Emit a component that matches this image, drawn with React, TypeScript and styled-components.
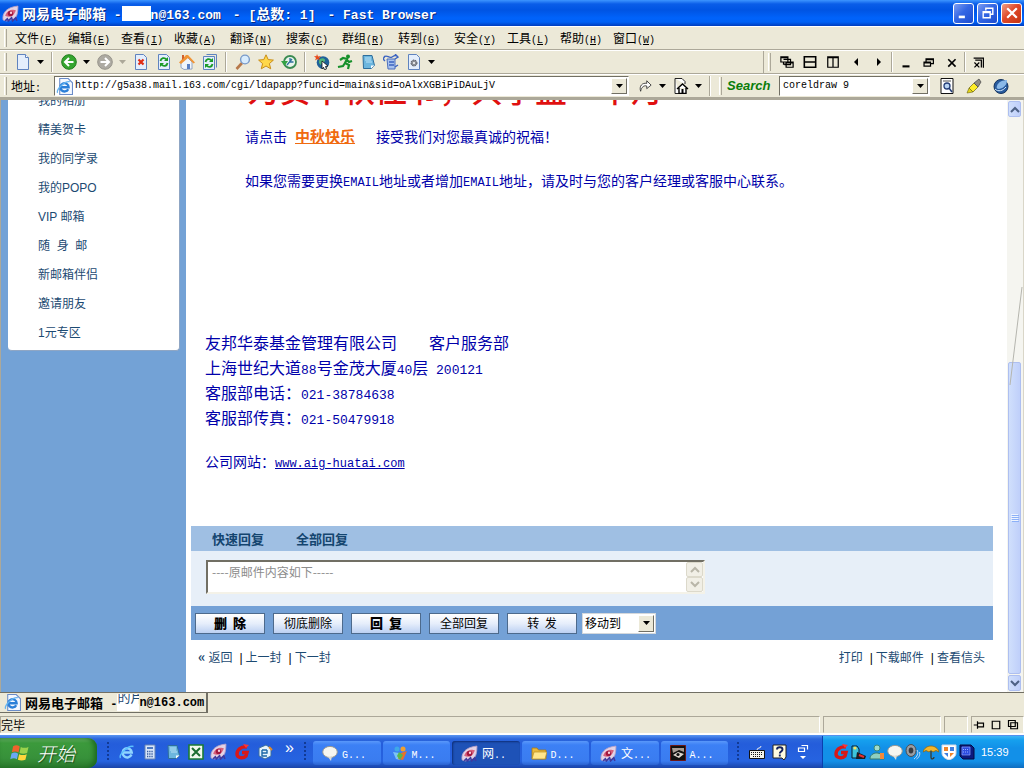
import React from 'react';
import styled, { createGlobalStyle, css } from 'styled-components';

const cjk = '"Noto Sans CJK SC", sans-serif';
const mono = '"Liberation Mono", "Noto Sans CJK SC", monospace';

const Global = createGlobalStyle`
  *, *::before, *::after { box-sizing: border-box; }
  body { margin: 0; background: #ece9d8; }
  button, input, select, textarea { font: inherit; color: inherit; margin: 0; padding: 0; border: 0; border-radius: 0; outline: none; }
  button { background: none; cursor: pointer; }
  a { color: inherit; text-decoration: none; }
`;

/* ---------- shell ---------- */
const Screen = styled.div`
  display: flex;
  flex-direction: column;
  height: 100vh;
  overflow: hidden;
  font-family: ${cjk};
  font-size: 12px;
  line-height: 16px;
  color: #000;
  white-space: pre;
`;
const Latin = styled.span<{ $size?: number }>`
  font-family: ${mono};
  font-size: ${(p) => p.$size ?? 10}px;
  line-height: 0;
`;

/* ---------- title bar ---------- */
const TitleBar = styled.header`
  display: flex;
  flex: none;
  align-items: center;
  height: 26px;
  padding: 0 2px;
  background: linear-gradient(#3d95ff 0, #0a5de8 4px, #0054e3 10px, #0063fb 18px, #0061f5 22px, #003dbe 26px);
  color: #fff;
  font-size: 14px;
  font-weight: bold;
  text-shadow: 1px 1px 0 #0a2a80;
`;
const TitleText = styled.h1`
  display: flex;
  flex: 1;
  align-items: center;
  margin: 0;
  padding-left: 3px;
  font-size: 14px;
  line-height: 20px;
`;
const TitlePart = styled.span`
  padding-right: 12px;
`;
const Mask = styled.span<{ $w: number; $h: number }>`
  flex: none;
  width: ${(p) => p.$w}px;
  height: ${(p) => p.$h}px;
  background: #fff;
  overflow: hidden;
`;
const WindowButtons = styled.div`
  display: flex;
  gap: 3px;
`;
const WindowButton = styled.button<{ $close?: boolean }>`
  display: grid;
  place-items: center;
  width: 21px;
  height: 21px;
  border: 1px solid #fff;
  border-radius: 3px;
  background: ${(p) => (p.$close ? 'linear-gradient(135deg, #f0a088, #e0492a 45%, #c43410)' : 'linear-gradient(135deg, #7d9df2, #3467e4 45%, #1c4cd0)')};
`;

/* ---------- menus and toolbars ---------- */
const Bar = styled.div`
  display: flex;
  flex: none;
  align-items: center;
  height: 24px;
  background: #ece9d8;
  border-top: 1px solid #fff;
  border-bottom: 1px solid #aca899;
`;
const Grip = styled.span`
  flex: none;
  width: 3px;
  height: 18px;
  margin: 0 4px;
  border-right: 1px solid #aca899;
  border-left: 1px solid #fff;
`;
const MenuButton = styled.button<{ $wide?: boolean }>`
  width: ${(p) => (p.$wide ? 56 : 53)}px;
  text-align: left;
  line-height: 20px;
`;
const MenuList = styled.nav`
  display: flex;
  padding-left: 4px;
`;
const Tool = styled.button`
  display: grid;
  flex: none;
  place-items: center;
  width: 23px;
  height: 22px;
`;
const Drop = styled.button<{ $muted?: boolean }>`
  display: grid;
  flex: none;
  place-items: center;
  width: 13px;
  height: 22px;
  color: ${(p) => (p.$muted ? '#aca899' : '#000')};
`;
const Divider = styled.span<{ $narrow?: boolean }>`
  flex: none;
  width: 2px;
  height: 20px;
  margin: 0 ${(p) => (p.$narrow ? 1 : 4)}px;
  border-left: 1px solid #aca899;
  border-right: 1px solid #fff;
`;
const Spacer = styled.span`
  flex: 1;
`;
const WindowTools = styled.div`
  display: flex;
  align-items: center;
  padding-right: 34px;
  border-left: 1px solid #aca899;
`;
const AddressLabel = styled.label`
  width: 43px;
  line-height: 20px;
`;
const Combo = styled.div<{ $w?: number }>`
  display: flex;
  align-items: center;
  ${(p) => (p.$w ? css`flex: none; width: ${p.$w}px;` : css`flex: 1;`)}
  height: 20px;
  padding: 1px;
  background: #fff;
  border: 1px solid;
  border-color: #716f64 #fff #fff #716f64;
  font: 10px/16px ${mono};
`;
const ComboInput = styled.input`
  flex: 1;
  min-width: 0;
  padding-left: 2px;
  background: transparent;
`;
const arrowFace = css`
  display: grid;
  place-items: center;
  width: 16px;
  height: 16px;
  background: #ece9d8;
  border: 1px solid;
  border-color: #fff #716f64 #716f64 #fff;
`;
const ComboArrow = styled.button`
  ${arrowFace}
  flex: none;
`;
const SearchWord = styled.span`
  width: 53px;
  padding-left: 1px;
  color: #0a7d0a;
  font: italic bold 13px/20px "Liberation Sans", sans-serif;
`;
const AddressTail = styled.div`
  display: flex;
  align-items: center;
  padding: 0 12px 0 4px;
`;
const SearchIcons = styled.div`
  display: flex;
  gap: 4px;
  padding-left: 5px;
`;

/* ---------- page ---------- */
const Viewport = styled.div`
  display: flex;
  flex: 1;
  min-height: 0;
  background: #fff;
  border-top: 2px solid #aca899;
  border-bottom: 1px solid #716f64;
  overflow: hidden;
`;
const Sidebar = styled.aside`
  flex: none;
  width: 186px;
  padding-left: 7px;
  background: #73a2d6;
  border-left: 1px solid #aca899;
`;
const SideCard = styled.nav`
  width: 172px;
  height: 251px;
  overflow: hidden;
  background: #fff;
  border-right: 1px solid #8fa6c4;
  border-bottom: 1px solid #8fa6c4;
  border-radius: 0 0 4px 4px;
`;
const SideList = styled.ul`
  margin: -13px 0 0;
  padding: 0 0 0 30px;
  list-style: none;
`;
const SideItem = styled.li`
  height: 29px;
  color: #1c4a72;
  font: 12px/29px "Liberation Sans", ${cjk};
`;
const Mail = styled.main`
  flex: 1;
  min-width: 0;
  padding: 0 14px 0 5px;
  overflow: hidden;
`;
const Letter = styled.article`
  height: 426px;
  overflow: hidden;
  padding-left: 14px;
  color: #00a;
  font-size: 14px;
  line-height: 20px;
`;
const Greeting = styled.h2`
  height: 27px;
  margin: -25px 0 24px 42px;
  color: #e01010;
  font-size: 32px;
  font-weight: 500;
  line-height: 27px;
`;
const Line = styled.p`
  margin: 0 0 24px 40px;
`;
const FestivalLink = styled.a`
  margin: 0 21px 0 8px;
  color: #f06a10;
  font-size: 15px;
  font-weight: bold;
  line-height: 0;
  text-decoration: underline;
`;
const Contact = styled.address`
  margin-top: 140px;
  color: #00a;
  font-size: 16px;
  font-style: normal;
  line-height: 25px;
`;
const Site = styled.p`
  margin: 21px 0 0;
`;
const SiteLink = styled.a`
  font: 12px/1px ${mono};
  text-decoration: underline;
`;
const ReplyTabs = styled.div`
  display: flex;
  gap: 32px;
  height: 25px;
  padding-left: 21px;
  background: #9fbfe3;
  color: #14456f;
  font-size: 13px;
  font-weight: bold;
`;
const ReplyTab = styled.button`
  line-height: 25px;
`;
const ReplyBody = styled.div`
  height: 55px;
  padding: 9px 15px;
  background: #e7eff8;
`;
const ReplyBox = styled.div`
  display: flex;
  width: 499px;
  max-width: 100%;
  height: 34px;
  background: #fff;
  border: 2px solid;
  border-color: #716f64 #f4f2e8 #f4f2e8 #716f64;
`;
const ReplyText = styled.textarea`
  flex: 1;
  min-width: 0;
  padding: 2px 4px;
  resize: none;
  overflow: hidden;
  background: transparent;
  color: #8c8c8c;
  font: 12px/16px ${cjk};
`;
const ReplyScroll = styled.div`
  display: flex;
  flex-direction: column;
  width: 17px;
`;
const ReplyArrow = styled.button`
  display: grid;
  flex: 1;
  place-items: center;
  background: #f1efe6;
  border: 1px solid #dcd9cb;
  border-radius: 2px;
  color: #b9b6a8;
`;
const Actions = styled.div`
  display: flex;
  align-items: center;
  gap: 8px;
  height: 34px;
  padding: 0 4px;
  background: #74a1d6;
`;
const Action = styled.button<{ $strong?: boolean }>`
  width: 70px;
  height: 21px;
  border: 1px solid #4d6a8c;
  background: linear-gradient(#fff, #e6eefb 50%, #bcd0f2);
  font-size: ${(p) => (p.$strong ? 13 : 12)}px;
  font-weight: ${(p) => (p.$strong ? 900 : 400)};
  line-height: 18px;
`;
const MoveBox = styled.label`
  position: relative;
  display: flex;
  margin-left: -3px;
`;
const MoveSelect = styled.select`
  width: 74px;
  height: 21px;
  padding-left: 2px;
  appearance: none;
  background: #fff;
  border: 1px solid #d4d8dc;
  line-height: 18px;
`;
const MoveArrow = styled.span`
  ${arrowFace}
  position: absolute;
  top: 2px;
  right: 2px;
  height: 17px;
  pointer-events: none;
`;
const MailNav = styled.footer`
  display: flex;
  justify-content: space-between;
  padding: 9px 8px 0 7px;
  color: #1c4a72;
`;
const NavLinks = styled.div`
  display: flex;
`;
const NavLink = styled.a`
  & + & {
    padding-left: 7px;
  }
  & + &::before {
    content: '|';
    padding-right: 3px;
    color: #000;
    font-family: "Liberation Sans", sans-serif;
  }
`;
const BackMark = styled.b`
  padding-right: 3px;
  font-size: 14px;
  line-height: 0;
`;
const Scrollbar = styled.div`
  position: relative;
  display: flex;
  flex: none;
  flex-direction: column;
  width: 17px;
  padding: 1px 2px 1px 1px;
  background: #f5f5f0;
  border-right: 1px solid #d9d6c8;
`;
const scrollFace = css`
  background: linear-gradient(90deg, #d0dffc, #bfcffa);
  border: 1px solid #aebff0;
  border-radius: 2px;
`;
const ScrollArrow = styled.button`
  ${scrollFace}
  display: grid;
  flex: none;
  place-items: center;
  height: 16px;
  color: #4d6185;
`;
const ScrollGap = styled.div`
  flex: 246;
`;
const ScrollThumb = styled.div`
  ${scrollFace}
  display: grid;
  flex: 311;
  place-items: center;
  margin-bottom: 1px;
`;
const Hair = styled.svg`
  position: absolute;
  top: 187px;
  right: 0;
  pointer-events: none;
`;

/* ---------- page tabs and status ---------- */
const PageTabs = styled.div`
  display: flex;
  flex: none;
  height: 23px;
  background: #ece9d8;
`;
const PageTab = styled.button`
  display: flex;
  align-items: center;
  width: 208px;
  height: 20px;
  padding-left: 4px;
  overflow: hidden;
  border: 1px solid;
  border-width: 0 2px 1px 0;
  border-color: #716f64;
  font-size: 13px;
  font-weight: bold;
  text-align: left;
`;
const TabTitle = styled.span`
  padding-left: 4px;
`;
const TabMask = styled(Mask)`
  color: #1c4a72;
  font-weight: 400;
  line-height: 6px;
`;
const StatusBar = styled.div`
  display: flex;
  flex: none;
  gap: 3px;
  height: 19px;
  background: #ece9d8;
  border-bottom: 2px solid #fff;
`;
const Pane = styled.div<{ $w?: number }>`
  display: flex;
  align-items: center;
  ${(p) => (p.$w ? css`flex: none; width: ${p.$w}px;` : css`flex: 1;`)}
  gap: 3px;
  border: 1px solid;
  border-color: #aca899 #fff #ece9d8 #aca899;
`;
const StatusTool = styled.button`
  display: grid;
  place-items: center;
  width: 14px;
  height: 15px;
`;

/* ---------- taskbar ---------- */
const Taskbar = styled.footer`
  display: flex;
  flex: none;
  align-items: center;
  height: 33px;
  background: linear-gradient(#5a96f2 0, #2b66dc 4px, #245ddb 9px, #2663e0 26px, #1a44a8 33px);
  color: #fff;
`;
const StartButton = styled.button`
  display: flex;
  flex: none;
  align-items: center;
  gap: 7px;
  align-self: stretch;
  width: 97px;
  margin-top: 3px;
  padding-left: 10px;
  border-radius: 0 9px 9px 0;
  background: linear-gradient(#6cb56a 0, #3c9a3c 5px, #37913a 20px, #2b7a2c 30px);
  box-shadow: inset -3px 0 5px #1d6a20;
  font-size: 19px;
  font-style: italic;
  font-weight: 300;
  line-height: 26px;
  text-shadow: 1px 1px 1px #1a4a1a;
`;
const DotGrip = styled.span`
  flex: none;
  width: 6px;
  height: 20px;
  background: conic-gradient(#123a94 25%, transparent 0) 0 0 / 4px 4px;
`;
const QuickLaunch = styled.div`
  display: flex;
  align-items: center;
  padding-right: 2px;
  margin-left: 8px;
`;
const QuickRow = styled.div`
  display: flex;
  align-items: center;
  margin-left: 4px;
`;
const Chevron = styled.button`
  align-self: flex-start;
  width: 24px;
  padding: 0 0 8px 3px;
  font: 16px/14px "Liberation Sans", sans-serif;
`;
const Tasks = styled.div`
  display: flex;
  flex: 1;
  gap: 2px;
  min-width: 0;
  padding: 3px 7px 0 5px;
`;
const Task = styled.button<{ $active?: boolean }>`
  display: flex;
  flex: 1;
  align-items: center;
  gap: 4px;
  height: 24px;
  min-width: 0;
  padding-left: 9px;
  border-radius: 3px;
  background: ${(p) => (p.$active ? '#1e52b7' : 'linear-gradient(#5a98fa, #3c80f5 4px, #3a7cf0 20px, #2b62cf)')};
  box-shadow: ${(p) => (p.$active ? 'inset 1px 1px 2px #0f2f78' : 'none')};
  overflow: hidden;
`;
const InputTools = styled.div`
  display: flex;
  align-items: center;
  flex: none;
  padding: 0 8px 0 4px;
`;
const Tray = styled.div`
  display: flex;
  flex: none;
  align-items: center;
  align-self: stretch;
  width: 202px;
  margin-top: 1px;
  padding-left: 9px;
  border-left: 1px solid #0a3fae;
  background: linear-gradient(#3fb5f5 0, #16a0ee 4px, #1290e8 12px, #1290e8 25px, #0f6dc0 32px);
`;
const TrayIcon = styled.span`
  display: grid;
  place-items: center;
  width: 18px;
`;
const Clock = styled.time`
  padding-left: 5px;
  font: 11px/16px "Liberation Sans", sans-serif;
`;

/* ---------- icons ---------- */
const Ico = ({ children, s = 16 }: { children: React.ReactNode; s?: number }) => (
  <svg width={s} height={s} viewBox="0 0 16 16" aria-hidden="true">{children}</svg>
);
const Tri = () => (
  <svg width="7" height="4" viewBox="0 0 7 4" aria-hidden="true"><path d="M0 0h7L3.500 4z" fill="currentColor" /></svg>
);
const Up = ({ flip }: { flip?: boolean }) => (
  <svg width="10" height="7" viewBox="0 0 10 7" aria-hidden="true">
    <path d={flip ? 'M1 1l4 4 4-4' : 'M1 6l4-4 4 4'} fill="none" stroke="currentColor" strokeWidth="2" />
  </svg>
);
const pageShape = (
  <path d="M2.500 .5h8l3 3v12h-11z" fill="#e4eefc" stroke="#5f83bf" />
);
const BrowserIcon = () => (
  <Ico s={17}>
    <path d="M1 14C0 8 4 2 15 1c0 6-1 10-3 12l-4 1-4 1z" fill="#e3d3e6" stroke="#b9a3c8" strokeWidth=".8" />
    <path d="M3 10c2-6 8-6 10-5-1 4-5 8-10 5z" fill="#d8607c" />
    <circle cx="8" cy="8" r="2.600" fill="#a01840" /><circle cx="8.500" cy="7.300" r="1.100" fill="#f9d0dc" />
    <path d="M3 15l2-2 1 2 3-3 1 3 3-3 1 3" fill="none" stroke="#3d3aa0" strokeWidth="1.500" />
  </Ico>
);
const IeMark = () => (
  <>
    <path d="M11.500 10.500A3.900 3.900 0 1 1 11.900 8.700H5" fill="none" stroke="#2a7fd8" strokeWidth="2.200" />
    <path d="M1.500 14C0 11 8 2.500 13 3.500" fill="none" stroke="#64b4f0" strokeWidth="1.200" />
  </>
);
const IePage = () => (<Ico s={17}><path d="M3.500 .5h8l4 4v11h-12z" fill="#f4f8ff" stroke="#6a8cc8" /><IeMark /></Ico>);
const IeIcon = () => (<Ico><path d="M12.500 10.500A4.600 4.600 0 1 1 12.800 8.500H4.500" fill="none" stroke="#8fd4ff" strokeWidth="2.400" /><path d="M1.500 14C-.5 11 9 1 14.500 2.500" fill="none" stroke="#5ac0ff" strokeWidth="1.400" /></Ico>);
const NewPage = () => (<Ico><path d="M2.500 .5h8l3 3v12h-11z" fill="#e4eefc" stroke="#5f83bf" /><path d="M10.500 .5v3h3" fill="#fff" stroke="#5f83bf" /></Ico>);
const RoundArrow = ({ back }: { back?: boolean }) => (
  <Ico>
    <circle cx="8" cy="8" r="7.300" fill={back ? '#35a52f' : '#adaaa2'} stroke={back ? '#1f7d1c' : '#97948b'} />
    <path d={back ? 'M12.500 8H4.500M8 4L4 8l4 4' : 'M3.500 8h8M8 4l4 4-4 4'} fill="none" stroke="#fff" strokeWidth="2" />
  </Ico>
);
const StopIcon = () => (<Ico>{pageShape}<path d="M5.500 5.500l5 5M10.500 5.500l-5 5" stroke="#e02c14" strokeWidth="2.200" /></Ico>);
const greenTurn = (
  <><path d="M4.500 7c.5-3 4-4 6-1.500M11.500 9c-.5 3-4 4-6 1.500" fill="none" stroke="#1a9a26" strokeWidth="1.800" /><path d="M12 3v4H8zM4 13V9h4z" fill="#1a9a26" /></>
);
const Refresh = () => (<Ico>{pageShape}{greenTurn}</Ico>);
const RefreshAll = () => (<Ico><path d="M4.500 .5h10v13" fill="none" stroke="#5f83bf" /><path d="M1.500 2.500h11v13h-11z" fill="#e4eefc" stroke="#5f83bf" /><g transform="translate(-1 1)">{greenTurn}</g></Ico>);
const HomeIcon = () => (
  <Ico><path d="M2 8l6-5 5 5v7l-8 .5-3-2z" fill="#f1f5fb" stroke="#7c93bd" strokeWidth=".8" /><path d="M0 8.500L7 1l2 0 7 7.500-1.500 1L9 4 2 10z" fill="#f09436" /><path d="M8 10h3v5H8z" fill="#5a7fc4" /><path d="M3 1h2v3L3 6z" fill="#d0602c" /></Ico>
);
const Magnifier = () => (<Ico><path d="M7 9l-5.500 6" stroke="#b7784a" strokeWidth="2.600" /><circle cx="10" cy="5.500" r="4.400" fill="#d8ecfd" stroke="#7799c8" strokeWidth="1.400" /></Ico>);
const Star = () => (<Ico><path d="M8 .8l2.200 4.800 5.200.5-4 3.500 1.300 5.200L8 12l-4.700 2.800 1.300-5.200-4-3.500 5.200-.5z" fill="#ffd84a" stroke="#c98d17" /></Ico>);
const HistoryIcon = () => (<Ico><circle cx="9" cy="8" r="6" fill="#e9f5ec" stroke="#3b8b52" strokeWidth="1.800" /><path d="M9 4v4h3.500M6 11l5-6" fill="none" stroke="#2e6f9c" strokeWidth="1.300" /><path d="M0 7h7l-3.500 5z" fill="#34a244" /></Ico>);
const GlobeIcon = () => (<Ico><circle cx="9" cy="8.500" r="6.300" fill="#1f6098" /><path d="M6 5c3-2 6 0 5 2s-4 1-4 4c-2-1-3-4-1-6z" fill="#4fb47c" /><path d="M8 7l6 5-2.500.5 1 2.500-2 .8-1-2.600L8 15z" fill="#fff" stroke="#111" strokeWidth=".8" /><path d="M3 0l1 2.500L7 2 5 4l1 2.500L3.500 5 1 6.500 2 4 0 2l2.300.3z" fill="#e84b1c" /></Ico>);
const Runner = () => (<Ico><circle cx="11" cy="2.500" r="2" fill="#16902a" /><path d="M3 6l3-2 4 1-2 4 4 2-1 4M8 9l-2 3-5 1M10 6l2 2 3-1" fill="none" stroke="#16902a" strokeWidth="2.200" /></Ico>);
const NoteIcon = () => (<Ico><path d="M3 1.500h9l2.500 10-3 3H3.500z" fill="#6cb6de" stroke="#2e6e9c" /><path d="M5 4h6M5 6h6M6 8h6" stroke="#b8e0f5" /><path d="M11 14.500v-3h3.500z" fill="#fff" /></Ico>);
const SyncIcon = () => (<Ico><path d="M4 5h8v10H5z" fill="#a8c2ee" stroke="#4c6fbd" /><path d="M1 3c3-3 5 2 8 0s4-2 6 0M12 0l3 3-3 2M2 7L0 5l2-3M6 8h5M6 11h5M12 13l3-2" fill="none" stroke="#3b63c0" strokeWidth="1.400" /></Ico>);
const GearPage = () => (<Ico>{pageShape}<circle cx="8" cy="9" r="3" fill="#8b8e96" stroke="#50545e" strokeDasharray="1.500 1" /><circle cx="8" cy="9" r="1" fill="#fff" /></Ico>);
const Outline = ({ d, w = 1.4, s = 14 }: { d: string; w?: number; s?: number }) => (
  <Ico s={s}><path d={d} fill="none" stroke="#000" strokeWidth={w} /></Ico>
);
const Wedge = ({ left }: { left?: boolean }) => (<Ico><path d={left ? 'M10 4v8L6 8z' : 'M6 4v8l4-4z'} /></Ico>);
const GoIcon = () => (<Ico s={14}><path d="M3 14C1 8 5 4 10 5V2l5 5-5 4V8C7 7 4 9 3 14z" fill="#fff" stroke="#333" /></Ico>);
const HomePage = () => (<Ico><path d="M2 .5h7l3 3V6M2 .5v15h4" fill="#fff" stroke="#222" /><path d="M4 11l5.500-5 5.500 5M6 10v5.500h7V10" fill="#fff" stroke="#000" strokeWidth="1.400" /><path d="M8.500 11h2v4h-2z" /></Ico>);
const SearchPage = () => (<Ico><path d="M2 .5h12v15H2z" fill="#fff" stroke="#111" /><path d="M4 3h8" stroke="#555" /><circle cx="8" cy="8" r="3" fill="#b9d5f5" stroke="#243e78" strokeWidth="1.300" /><path d="M10 10l3 4" stroke="#243e78" strokeWidth="1.600" /></Ico>);
const Marker = () => (<Ico><path d="M1 15l2-5 4 4z" fill="#e5d618" stroke="#6b6410" strokeWidth=".6" /><path d="M3 10l5-5 4 4-5 5z" fill="#ffee28" stroke="#6b6410" strokeWidth=".7" /><path d="M8 5l5-4 2 3-3 5z" fill="#8f8c84" stroke="#444" strokeWidth=".7" /></Ico>);
const BlueGlobe = () => (<Ico><circle cx="8" cy="8.500" r="7" fill="#285b9e" stroke="#16345e" /><path d="M4 8c1-4 6-6 10-6 0 5-3 8-8 9-2 0-3-1-2-3z" fill="#8ab9e8" /><path d="M2 11c3 3 8 2 11-2" stroke="#d6ecff" fill="none" /></Ico>);
const Flag = () => (
  <Ico s={20}><path d="M2.500 2.500c2-1 3.700-.8 5.300.2L6.800 7.500C5 6.500 3.400 6.500 1.500 7.300z" fill="#f0622c" /><path d="M8.600 3.200c2 .9 4 .9 6.200 0l-1.100 4.700c-2 .8-4 .8-6.100 0z" fill="#9ad24c" /><path d="M1.200 8.300c2-.9 3.700-.8 5.300.2l-1 4.500c-1.600-1-3.300-1-5.300 0z" fill="#6aa8f4" /><path d="M7.300 8.900c2 .9 4 .9 6.100 0l-1.100 4.500c-2 .8-4 .8-6 0z" fill="#ffd63c" /></Ico>
);
const Calculator = () => (<Ico><path d="M3 1h10v14H3z" fill="#d8e6fa" stroke="#6783b3" /><path d="M5 3h6v2H5z" fill="#4c79c2" /><path d="M5 7.500h6M5 10h6M5 12.500h6" stroke="#35599b" strokeWidth="1.300" strokeDasharray="1.300 .9" /></Ico>);
const ExcelIcon = () => (<Ico><path d="M1 1h14v14H1z" fill="#f0f8ee" stroke="#1b7a35" strokeWidth="1.600" /><path d="M4 4l8 8M12 4l-8 8" stroke="#1b6d30" strokeWidth="2" /></Ico>);
const RedG = () => (<Ico><path d="M13 3C7 2 3 6 3 10c0 4 6 5 9 2l1-3.500H8" fill="none" stroke="#d81818" strokeWidth="3.400" /><path d="M9 0l6 1-3 3z" fill="#f33" /></Ico>);
const CubeIcon = () => (<Ico><path d="M2 4l7-3 5 3v8l-6 3-6-3z" fill="#e4f3fc" stroke="#3a6d9e" /><path d="M5 6h5M5 6v6h5M10 6v3H5" stroke="#1c68a8" strokeWidth="1.400" fill="none" /><path d="M12 3l3 3" stroke="#e08a2a" strokeWidth="2" /></Ico>);
const Bubble = () => (<Ico><ellipse cx="8" cy="7" rx="7.300" ry="5.600" fill="#f6f6f0" stroke="#9a9a94" /><path d="M6 12l3 4 1-5z" fill="#deded6" /></Ico>);
const Buddies = () => (<Ico><circle cx="5" cy="4" r="2.500" fill="#3fa8e8" /><circle cx="11" cy="4" r="2.500" fill="#f0a030" /><path d="M1 7l6 1 1 7-4-1z" fill="#7cc4f4" /><path d="M15 6l-6 2-3 6 5 1z" fill="#e8702c" /><path d="M7 7l4 3-3 5-3-4z" fill="#58b84c" /></Ico>);
const Folder = () => (<Ico><path d="M1 3h5l1.500 2H15v9H1z" fill="#e8b83c" stroke="#a67a18" strokeWidth=".8" /><path d="M3 7h13l-2 7H1z" fill="#ffe68c" stroke="#b88c22" strokeWidth=".7" /></Ico>);
const EyePic = () => (<Ico><path d="M.5.5h15v15H.5z" fill="#111" stroke="#6a1616" /><path d="M2 3h12v4L9 5 3 8z" fill="#a89c94" /><path d="M3 10l5-3 6 2-5 4z" fill="#ddd5cd" /><circle cx="8" cy="9.500" r="1.600" fill="#111" /></Ico>);
const Keyboard = () => (<Ico><path d="M8 6c0-3 4-1 4-4" fill="none" stroke="#eee" /><path d="M.5 6.500h15v8H.5z" fill="#f4f2e8" stroke="#111" /><path d="M2 8.500h12M2 10.500h12M4 12.500h8" stroke="#111" strokeDasharray="1 1" /></Ico>);
const HelpIcon = () => (<Ico><path d="M1 1h13v12l-2 3-2-2H1z" fill="#fffce0" stroke="#222" /><path d="M5 5.500c0-3 5.500-3 5.500 0 0 2-2.700 2-2.700 4M7.800 10.500v2" fill="none" stroke="#13205c" strokeWidth="1.900" /></Ico>);
const RestoreIcon = () => (<Ico><path d="M6.500 1.500h6v4M3.500 4h6v3.500h-6z" fill="none" stroke="#fff" strokeWidth="1.200" /><path d="M5 12h6l-3 3z" fill="#fff" /></Ico>);
const Duo = () => (<Ico><path d="M1 2h5l2 3v9H1z" fill="#3cc4dc" stroke="#0a1c30" /><path d="M6 8l9 4-1 3H5z" fill="#1c1c22" /><path d="M8 11l5 2" stroke="#e83030" strokeWidth="2" /><circle cx="4" cy="4" r="1.600" fill="#f8e060" /></Ico>);
const Person = () => (<Ico><circle cx="8" cy="4" r="3" fill="#a2dccb" stroke="#3d8878" /><path d="M1 15c0-8 13-8 14 0z" fill="#8fd0bf" stroke="#36786c" /><path d="M11 9h4v6h-4z" fill="#f08a3c" /></Ico>);
const Speaker = () => (<Ico><ellipse cx="6" cy="6.500" rx="5" ry="6" fill="#9a9ea4" stroke="#4a4d52" /><ellipse cx="6" cy="6.500" rx="2.300" ry="3" fill="#383a40" /><path d="M12 6c2 3 0 7-3 9M14.500 8c1 3-1 6-3 7" fill="none" stroke="#c4dcf8" /></Ico>);
const Umbrella = () => (<Ico><path d="M0 8C2 0 14 0 16 8l-3-1.500L10 8 8 6.500 6 8 3 6.500z" fill="#f4b62a" stroke="#8e6410" strokeWidth=".8" /><path d="M8 7v6c0 3 3 2 3 0" fill="none" stroke="#3a3a30" strokeWidth="1.300" /></Ico>);
const Shield = () => (<Ico><path d="M1 1h14v8c0 4-4 6-7 7-3-1-7-3-7-7z" fill="#fff" stroke="#d4d8e4" /><path d="M3 3h4v4H3zM9 9h4l-4 4z" fill="#f0852a" /><path d="M9 3h4v4H9zM3 9h4v4z" fill="#3f7fe0" /></Ico>);
const Monitor = () => (<Ico><path d="M1 1h11l3 3v11H4l-3-3z" fill="#0c1a80" stroke="#050a40" /><path d="M3 3h8v8H3z" fill="#2c4ce0" stroke="#8ca4ff" strokeWidth=".7" /><path d="M4 5.500h6M4 8h6" stroke="#9ab0ff" strokeDasharray="1 1" /></Ico>);

/* ---------- content ---------- */
const menus: [string, string, boolean?][] = [
  ['文件', 'F'], ['编辑', 'E'], ['查看', 'I'], ['收藏', 'A', true], ['翻译', 'N', true], ['搜索', 'C', true],
  ['群组', 'R', true], ['转到', 'G', true], ['安全', 'Y'], ['工具', 'L'], ['帮助', 'H'], ['窗口', 'W'],
];
const sideItems = ['我的相册', '精美贺卡', '我的同学录', '我的POPO', 'VIP 邮箱', '随\u00a0\u00a0身\u00a0\u00a0邮', '新邮箱伴侣', '邀请朋友', '1元专区'];
const tasks: [React.ReactNode, string, string][] = [
  [<Bubble />, '', 'G...'], [<Buddies />, '', 'M...'], [<BrowserIcon />, '网', '..'],
  [<Folder />, '', 'D...'], [<BrowserIcon />, '文', '...'], [<EyePic />, '', 'A...'],
];
const quick: [string, React.ReactNode][] = [
  ['Internet', <IeIcon />], ['计算器', <Calculator />], ['记事本', <NoteIcon />], ['表格', <ExcelIcon />],
  ['浏览器', <BrowserIcon />], ['下载', <RedG />], ['桌面', <CubeIcon />],
];
const tray = [<RedG />, <Duo />, <Person />, <Bubble />, <Speaker />, <Umbrella />, <Shield />, <Monitor />];

export default function App() {
  return (
    <Screen>
      <Global />
      <TitleBar>
        <BrowserIcon />
        <TitleText>
          <span>网易电子邮箱<Latin $size={13}> -</Latin></span>
          <Mask $w={29} $h={15} />
          <TitlePart><Latin $size={13}>n@163.com</Latin></TitlePart>
          <TitlePart><Latin $size={13}>- [</Latin>总数<Latin $size={13}>: 1]</Latin></TitlePart>
          <TitlePart><Latin $size={13}>- Fast Browser</Latin></TitlePart>
        </TitleText>
        <WindowButtons>
          <WindowButton aria-label="最小化"><Ico s={14}><path d="M2 11h7v3H2z" fill="#fff" /></Ico></WindowButton>
          <WindowButton aria-label="还原"><Ico s={14}><path d="M5.500 5V2.500h8v7H11M2.500 6.500h8v7h-8zM2.500 7.500h8" fill="none" stroke="#fff" strokeWidth="1.600" /></Ico></WindowButton>
          <WindowButton $close aria-label="关闭"><Ico s={14}><path d="M2.500 2.500l11 11M13.500 2.500l-11 11" stroke="#fff" strokeWidth="2.600" /></Ico></WindowButton>
        </WindowButtons>
      </TitleBar>

      <Bar>
        <Grip />
        <MenuList>
          {menus.map(([name, key, wide]) => (
            <MenuButton key={key} $wide={wide}>{name}<Latin>(<u>{key}</u>)</Latin></MenuButton>
          ))}
        </MenuList>
      </Bar>

      <Bar>
        <Grip />
        <Tool aria-label="新建"><NewPage /></Tool>
        <Drop aria-label="新建选项"><Tri /></Drop>
        <Divider />
        <Tool aria-label="后退"><RoundArrow back /></Tool>
        <Drop aria-label="后退选项"><Tri /></Drop>
        <Tool aria-label="前进"><RoundArrow /></Tool>
        <Drop $muted aria-label="前进选项"><Tri /></Drop>
        <Tool aria-label="停止"><StopIcon /></Tool>
        <Tool aria-label="刷新"><Refresh /></Tool>
        <Tool aria-label="主页"><HomeIcon /></Tool>
        <Tool aria-label="全部刷新"><RefreshAll /></Tool>
        <Divider />
        <Tool aria-label="搜索"><Magnifier /></Tool>
        <Tool aria-label="收藏"><Star /></Tool>
        <Tool aria-label="历史"><HistoryIcon /></Tool>
        <Divider />
        <Tool aria-label="代理"><GlobeIcon /></Tool>
        <Tool aria-label="运行"><Runner /></Tool>
        <Tool aria-label="笔记"><NoteIcon /></Tool>
        <Tool aria-label="同步"><SyncIcon /></Tool>
        <Tool aria-label="设置"><GearPage /></Tool>
        <Drop aria-label="设置选项"><Tri /></Drop>
        <Spacer />
        <WindowTools>
          <Grip />
          <Tool aria-label="层叠"><Outline d="M1 2h8v6H1zM1 3h8M4 8v2.500h3M4 5h8v6H5M7 8h8v6H7zM7 9h8" /></Tool>
          <Tool aria-label="横向平铺"><Outline d="M1.500 2h13v12h-13zM1.500 8h13" w={1.8} /></Tool>
          <Tool aria-label="纵向平铺"><Outline d="M2 2h12v12H2zM2 3h12M8 3v11" /></Tool>
          <Tool aria-label="上一个"><Wedge left /></Tool>
          <Tool aria-label="下一个"><Wedge /></Tool>
          <Divider $narrow />
          <Tool aria-label="最小化页面"><Outline d="M4 13h8" w={2.4} /></Tool>
          <Tool aria-label="还原页面"><Outline d="M5 7V3.500h9v6h-3M2.500 7.500h8v5h-8zM5 4.500h9M2.500 8.500h8" w={1.5} s={13} /></Tool>
          <Tool aria-label="关闭页面"><Outline d="M4 4l9 9M13 4l-9 9" w={2} s={13} /></Tool>
          <Divider $narrow />
          <Tool aria-label="全部关闭"><Outline d="M2 2.500h12v12M4 5h7.500v9M3 8l6 6M9 8l-6 6" w={1.5} s={13} /></Tool>
        </WindowTools>
      </Bar>

      <Bar>
        <Grip />
        <AddressLabel htmlFor="address">地址<Latin>:</Latin></AddressLabel>
        <Combo>
          <IePage />
          <ComboInput id="address" defaultValue="http://g5a38.mail.163.com/cgi/ldapapp?funcid=main&sid=oAlxXGBiPiDAuLjV" />
          <ComboArrow aria-label="展开地址"><Tri /></ComboArrow>
        </Combo>
        <AddressTail>
          <Tool aria-label="转到"><GoIcon /></Tool>
          <Drop aria-label="转到选项"><Tri /></Drop>
          <Tool aria-label="保存主页"><HomePage /></Tool>
          <Drop aria-label="主页选项"><Tri /></Drop>
          <Divider />
          <Grip />
          <SearchWord>Search</SearchWord>
          <Combo $w={151}>
            <ComboInput aria-label="搜索内容" defaultValue="coreldraw 9" />
            <ComboArrow aria-label="展开搜索"><Tri /></ComboArrow>
          </Combo>
          <SearchIcons>
            <Tool aria-label="在页面中查找"><SearchPage /></Tool>
            <Tool aria-label="突出显示"><Marker /></Tool>
            <Tool aria-label="网络搜索"><BlueGlobe /></Tool>
          </SearchIcons>
        </AddressTail>
      </Bar>

      <Viewport>
        <Sidebar>
          <SideCard>
            <SideList>
              {sideItems.map((t) => <SideItem key={t}><a href="#side">{t}</a></SideItem>)}
            </SideList>
          </SideCard>
        </Sidebar>
        <Mail>
          <Letter>
            <Greeting>为贺中秋佳节，共享盛·中月</Greeting>
            <Line>请点击<FestivalLink href="#festival">中秋快乐</FestivalLink>接受我们对您最真诚的祝福！</Line>
            <Line>如果您需要更换<Latin $size={12}>EMAIL</Latin>地址或者增加<Latin $size={12}>EMAIL</Latin>地址，请及时与您的客户经理或客服中心联系。</Line>
            <Contact>
              <div>友邦华泰基金管理有限公司　　客户服务部</div>
              <div>上海世纪大道<Latin $size={13}>88</Latin>号金茂大厦<Latin $size={13}>40</Latin>层<Latin $size={13}> 200121</Latin></div>
              <div>客服部电话：<Latin $size={13}>021-38784638</Latin></div>
              <div>客服部传真：<Latin $size={13}>021-50479918</Latin></div>
            </Contact>
            <Site>公司网站：<SiteLink href="#site">www.aig-huatai.com</SiteLink></Site>
          </Letter>
          <ReplyTabs>
            <ReplyTab>快速回复</ReplyTab>
            <ReplyTab>全部回复</ReplyTab>
          </ReplyTabs>
          <ReplyBody>
            <ReplyBox>
              <ReplyText aria-label="回复内容" defaultValue="----原邮件内容如下-----" />
              <ReplyScroll>
                <ReplyArrow aria-label="向上"><Up /></ReplyArrow>
                <ReplyArrow aria-label="向下"><Up flip /></ReplyArrow>
              </ReplyScroll>
            </ReplyBox>
          </ReplyBody>
          <Actions>
            <Action $strong>删  除</Action>
            <Action>彻底删除</Action>
            <Action $strong>回  复</Action>
            <Action>全部回复</Action>
            <Action>转  发</Action>
            <MoveBox>
              <MoveSelect aria-label="移动到"><option>移动到</option></MoveSelect>
              <MoveArrow><Tri /></MoveArrow>
            </MoveBox>
          </Actions>
          <MailNav>
            <NavLinks>
              <NavLink href="#back"><BackMark>«</BackMark>返回</NavLink>
              <NavLink href="#prev">上一封</NavLink>
              <NavLink href="#next">下一封</NavLink>
            </NavLinks>
            <NavLinks>
              <NavLink href="#print">打印</NavLink>
              <NavLink href="#download">下载邮件</NavLink>
              <NavLink href="#headers">查看信头</NavLink>
            </NavLinks>
          </MailNav>
        </Mail>
        <Scrollbar>
          <ScrollArrow aria-label="向上滚动"><Up /></ScrollArrow>
          <ScrollGap />
          <ScrollThumb>
            <svg width="8" height="8" viewBox="0 0 8 8" aria-hidden="true">
              <path d="M0 .5h7M0 2.500h7M0 4.500h7M0 6.500h7" stroke="#eef4fe" />
              <path d="M1 1.500h7M1 3.500h7M1 5.500h7M1 7.500h7" stroke="#8cb0f8" />
            </svg>
          </ScrollThumb>
          <ScrollArrow aria-label="向下滚动"><Up flip /></ScrollArrow>
          <Hair width="14" height="100" viewBox="0 0 14 100" aria-hidden="true"><path d="M13 0L1 98" stroke="#b5b5ae" fill="none" /></Hair>
        </Scrollbar>
      </Viewport>

      <PageTabs>
        <PageTab>
          <IePage />
          <TabTitle>网易电子邮箱<Latin $size={12}> -</Latin></TabTitle>
          <TabMask $w={22} $h={17}>的片</TabMask>
          <Latin $size={12}>n@163.com</Latin>
        </PageTab>
      </PageTabs>
      <StatusBar>
        <Pane>完毕</Pane>
        <Pane $w={118} />
        <Pane $w={24} />
        <Pane $w={53}>
          <StatusTool aria-label="固定"><Outline d="M1 8h5M6 3v10M6 5.500h8v5H6" w={1.6} s={12} /></StatusTool>
          <StatusTool aria-label="窗口"><Outline d="M3 3h10v10H3z" w={1.6} s={12} /></StatusTool>
          <StatusTool aria-label="多窗口"><Outline d="M2 2h9v8H2zM5 5h9v8H5z" w={1.6} s={12} /></StatusTool>
        </Pane>
      </StatusBar>

      <Taskbar>
        <StartButton><Flag />开始</StartButton>
        <QuickLaunch>
          <DotGrip />
          <QuickRow>
            {quick.map(([label, icon]) => <Tool key={label} aria-label={label}>{icon}</Tool>)}
          </QuickRow>
          <Chevron aria-label="更多">»</Chevron>
        </QuickLaunch>
        <DotGrip />
        <Tasks>
          {tasks.map(([icon, zh, en], i) => (
            <Task key={i} $active={i === 2}>{icon}<span>{zh}<Latin>{en}</Latin></span></Task>
          ))}
        </Tasks>
        <DotGrip />
        <InputTools>
          <Tool aria-label="输入法"><Keyboard /></Tool>
          <Tool aria-label="帮助"><HelpIcon /></Tool>
          <Tool aria-label="还原语言栏"><RestoreIcon /></Tool>
        </InputTools>
        <Tray>
          {tray.map((icon, i) => <TrayIcon key={i}>{icon}</TrayIcon>)}
          <Clock>15:39</Clock>
        </Tray>
      </Taskbar>
    </Screen>
  );
}
